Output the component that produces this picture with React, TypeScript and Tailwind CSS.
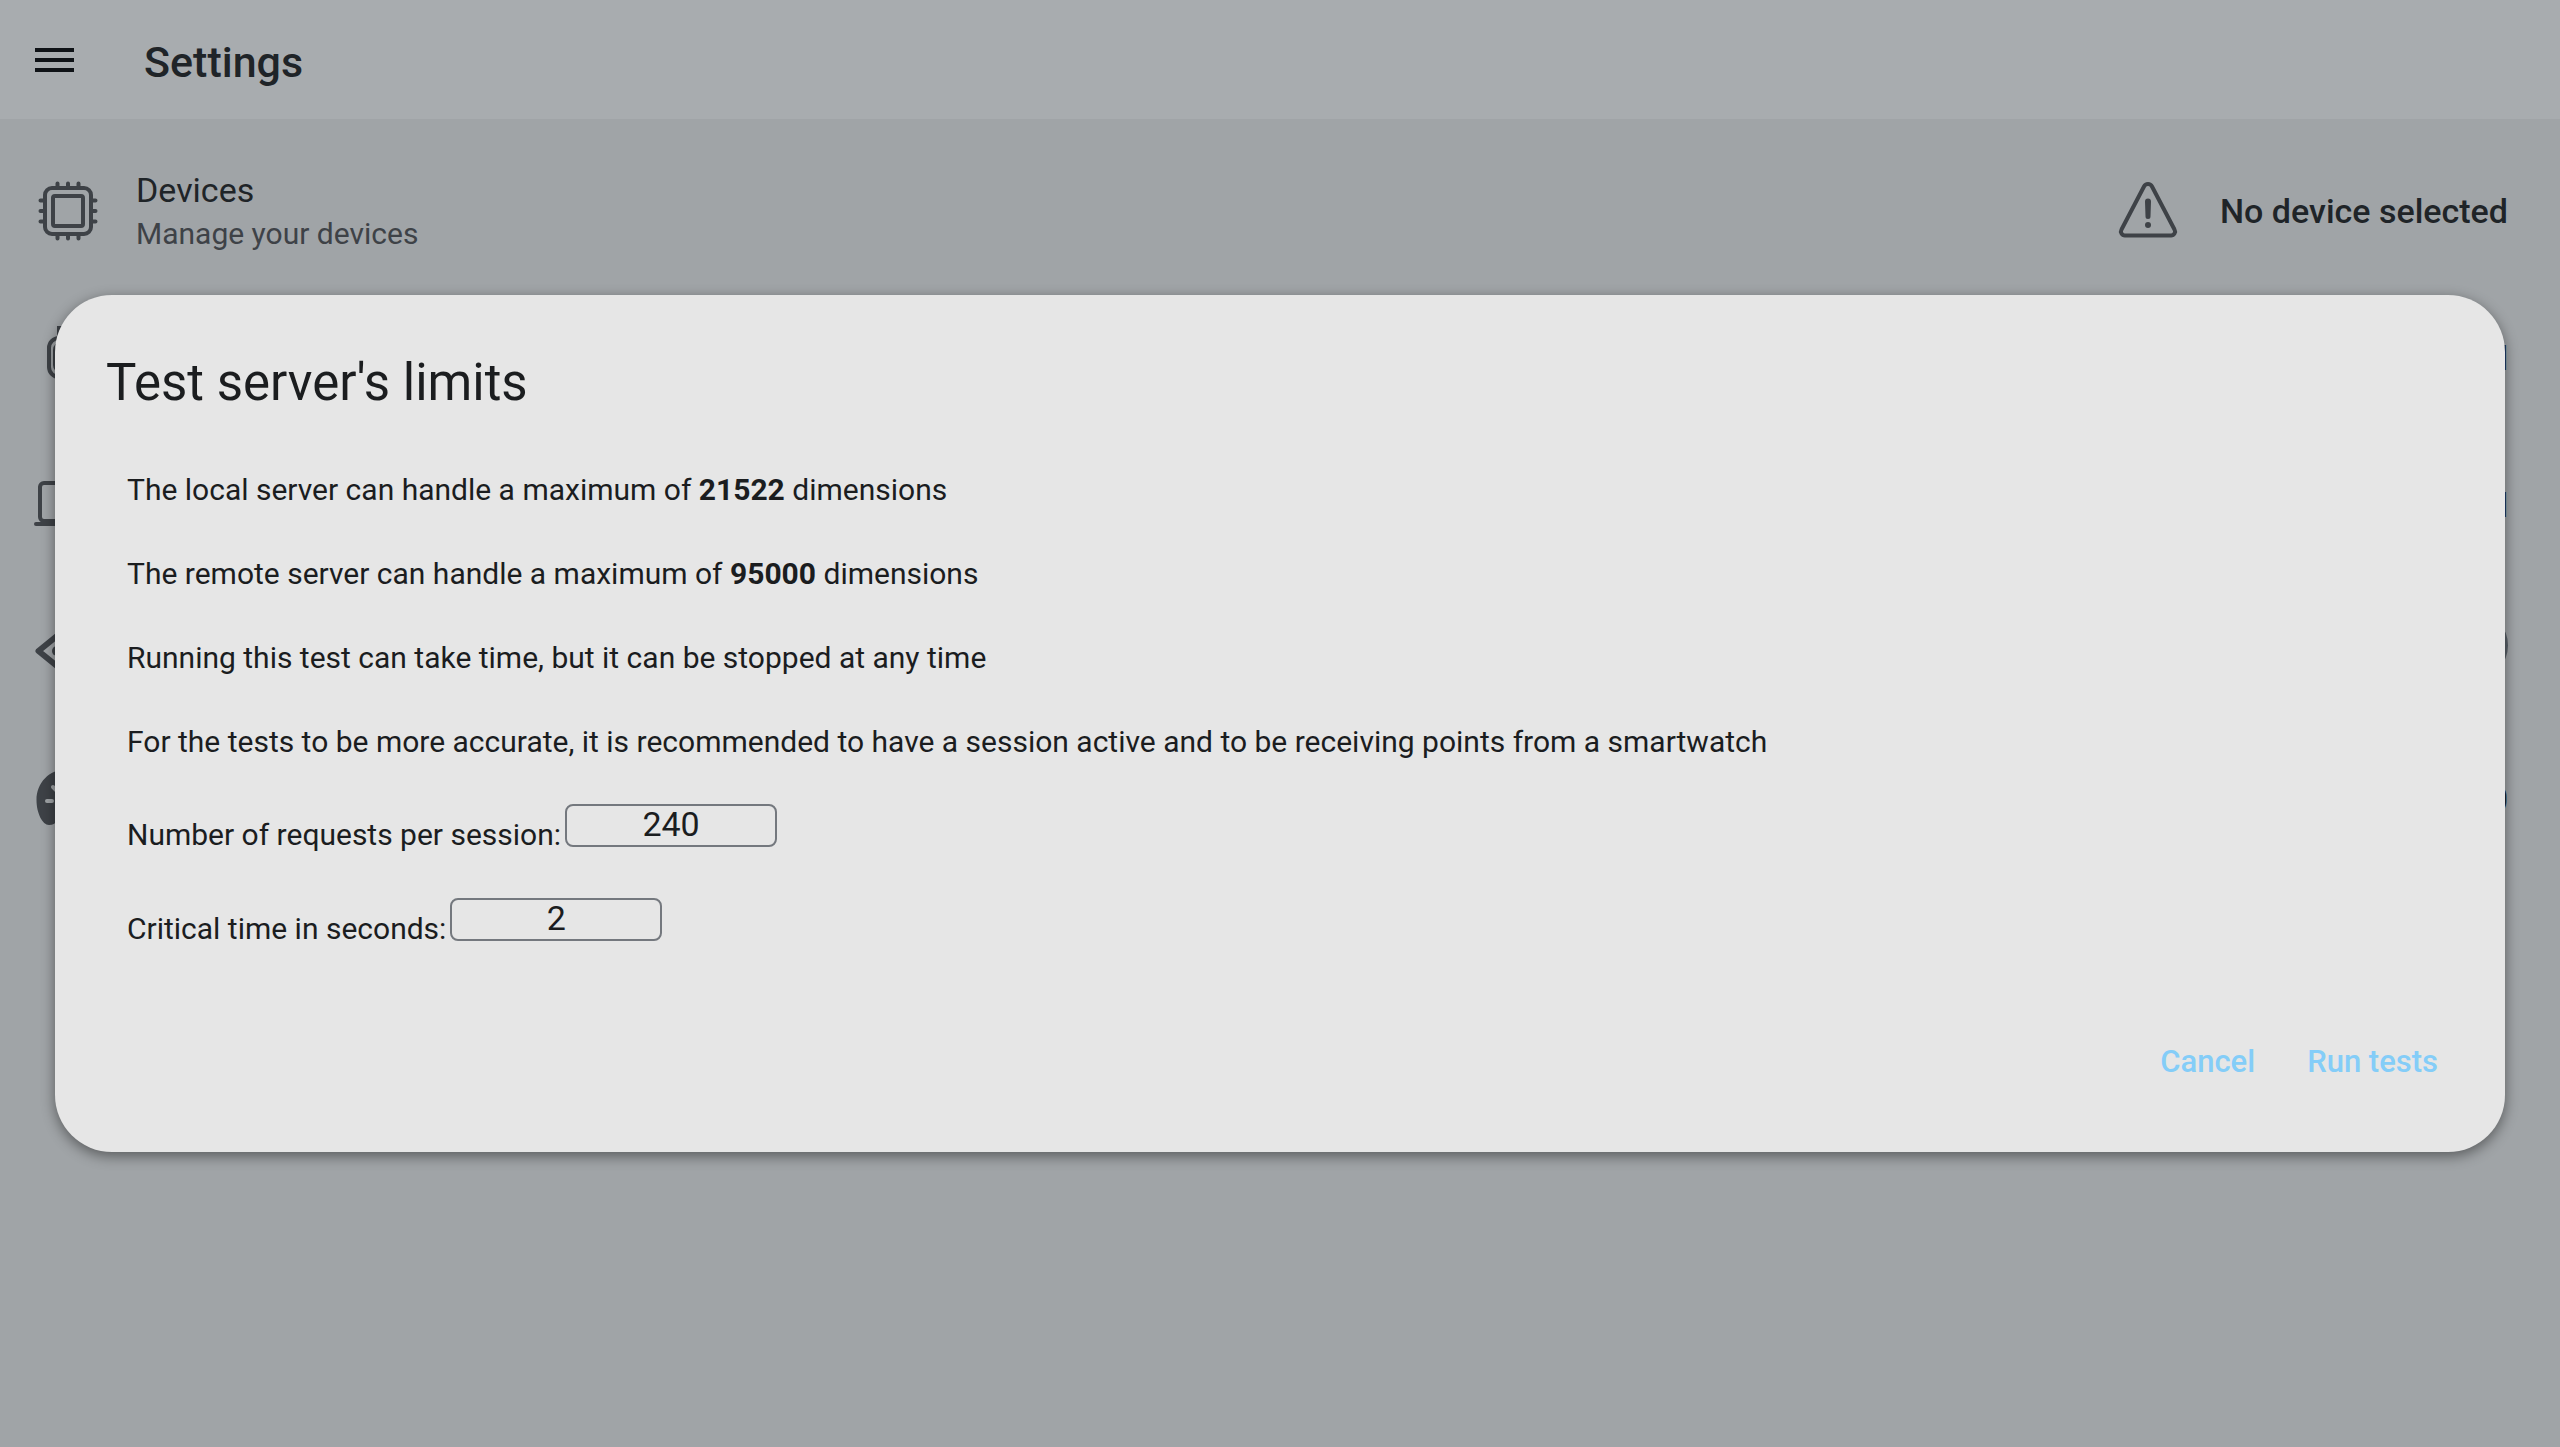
import React from "react";

const iconClass = "size-16 shrink-0 overflow-visible text-[#3e4247]";

function ChipIcon() {
  return (
    <svg viewBox="0 0 64 64" className={iconClass} fill="none" stroke="currentColor" strokeWidth="4" strokeLinecap="round" aria-hidden="true">
      <rect x="9" y="9" width="46" height="46" rx="7" />
      <rect x="17" y="17" width="30" height="30" rx="2" />
      <path d="M21.500 8V4.500M32 8V4.500M42.500 8V4.500M21.500 56v3.500M32 56v3.500M42.500 56v3.500M8 21.500H4.500M8 32H4.500M8 42.500H4.500M56 21.500h3.500M56 32h3.500M56 42.500h3.500" />
    </svg>
  );
}

function WatchIcon() {
  return (
    <svg viewBox="0 0 64 64" className={iconClass} fill="none" stroke="currentColor" strokeWidth="4" aria-hidden="true">
      <rect x="13" y="12" width="38" height="39" rx="10" />
      <rect x="19" y="18" width="26" height="27" rx="6" />
      <path fill="currentColor" stroke="none" d="M21 11V0h22v11zM21 53v11h22V53z" />
    </svg>
  );
}

function LaptopIcon() {
  return (
    <svg viewBox="0 0 64 64" className={iconClass} fill="none" stroke="currentColor" strokeWidth="4" strokeLinecap="round" aria-hidden="true">
      <rect x="4" y="10" width="56" height="38" rx="4" />
      <path d="M0 51h64" />
    </svg>
  );
}

function DiamondIcon() {
  return (
    <svg viewBox="0 0 64 64" className={iconClass} fill="none" stroke="currentColor" strokeWidth="6" strokeLinejoin="round" strokeLinecap="round" aria-hidden="true">
      <path d="M2.500 31 32 7l29.500 24L32 55z" />
      <circle cx="21" cy="31" r="5" fill="currentColor" stroke="none" />
      <circle cx="43" cy="31" r="5" fill="currentColor" stroke="none" />
    </svg>
  );
}

function GaugeIcon() {
  return (
    <svg viewBox="0 0 64 64" className={iconClass} aria-hidden="true">
      <path fill="currentColor" d="M32 2C13 2 .5 16 .5 33c0 13 6 25 12.500 25 8 0 8-7 19-7s11 7 19 7C57.500 58 63.500 46 63.500 33 63.500 16 51 2 32 2z" />
      <path stroke="#a0a4a7" strokeWidth="4" strokeLinecap="round" d="M11 34h5M48 34h5M17 20l5 5M32 13v6" />
    </svg>
  );
}

function WarningIcon() {
  return (
    <svg viewBox="0 0 64 64" className={iconClass} fill="none" stroke="currentColor" strokeWidth="4" strokeLinejoin="round" strokeLinecap="round" aria-hidden="true">
      <path d="M28 7.500a4.500 4.500 0 0 1 8 0L58.500 50.500a4 4 0 0 1-3.500 6H9a4 4 0 0 1-3.500-6z" />
      <path fill="currentColor" stroke="none" d="M29 22.500a3 3 0 0 1 6 0l-.5 15a2.500 2.500 0 0 1-5 0z" />
      <circle cx="32" cy="46" r="3" fill="currentColor" stroke="none" />
    </svg>
  );
}

function Row({ icon, title, detail, children }: { icon: React.ReactNode; title?: string; detail?: string; children: React.ReactNode }) {
  return (
    <li className="flex h-[147px] items-center pr-[52px] pl-9">
      {icon}
      <div className="ml-9 grow pt-[2px]">
        {title && <h2 className="text-[34px] leading-[44px] text-[#1f2428]">{title}</h2>}
        {detail && <p className="text-[30px] leading-[44px] text-[#3e4247]">{detail}</p>}
      </div>
      <div className="flex items-center gap-10 text-[34px] leading-[44px] font-medium text-[#1f2428]">{children}</div>
    </li>
  );
}

function NumberField({ id, label, value }: { id: string; label: string; value: string }) {
  return (
    <div className="flex h-[94px] items-center gap-1">
      <label htmlFor={id} className="pt-5">{label}</label>
      <input
        id={id}
        type="text"
        inputMode="numeric"
        defaultValue={value}
        className="h-[43px] w-[212px] rounded-lg border-2 border-[#74787e] bg-transparent pb-[2px] text-center text-[34px] leading-[36px]"
      />
    </div>
  );
}

export default function App() {
  return (
    <div className="relative min-h-screen bg-[#a0a4a7] font-['Roboto',sans-serif]">
      <header className="flex h-[119px] items-center bg-[#a8acaf]">
        <button type="button" aria-label="Open menu" className="ml-[35px] flex w-[39px] flex-col gap-[6px]">
          <span className="h-1 bg-[#0f1317]" />
          <span className="h-1 bg-[#0f1317]" />
          <span className="h-1 bg-[#0f1317]" />
        </button>
        <h1 className="ml-[70px] pt-1 text-[43px] leading-[52px] font-medium text-[#1f2428]">Settings</h1>
      </header>

      <ul className="pt-[18px]">
        <Row icon={<ChipIcon />} title="Devices" detail="Manage your devices">
          <WarningIcon />
          <span>No device selected</span>
        </Row>
        <Row icon={<WatchIcon />}>
          <span>d</span>
        </Row>
        <Row icon={<LaptopIcon />}>
          <span>d</span>
        </Row>
        <Row icon={<DiamondIcon />}>
          <input type="checkbox" aria-label="Simulation" className="mb-3 h-[67px] w-[109px] appearance-none rounded-full border-4 border-[#596169] bg-[#8f979e]" />
        </Row>
        <Row icon={<GaugeIcon />}>
          <span>0</span>
        </Row>
      </ul>

      <div className="absolute inset-0 flex items-center px-[55px]">
        <section
          role="dialog"
          aria-modal="true"
          aria-labelledby="dialog-title"
          className="w-full rounded-[57px] bg-[#e6e6e6] px-[51px] pt-[53px] pb-[52px] text-[30px] leading-[40px] text-[#1b1d1f] shadow-[0_4px_14px_rgba(0,0,0,0.45)]"
        >
          <h2 id="dialog-title" className="text-[51px] leading-[70px]">Test server's limits</h2>
          <div className="mt-[52px] flex flex-col gap-11 px-[21px]">
            <p>The local server can handle a maximum of <b>21522</b> dimensions</p>
            <p>The remote server can handle a maximum of <b>95000</b> dimensions</p>
            <p>Running this test can take time, but it can be stopped at any time</p>
            <p>For the tests to be more accurate, it is recommended to have a session active and to be receiving points from a smartwatch</p>
          </div>
          <div className="mt-4 px-[21px]">
            <NumberField id="requests" label="Number of requests per session:" value="240" />
            <NumberField id="critical" label="Critical time in seconds:" value="2" />
          </div>
          <div className="mt-[58px] flex justify-end gap-[52px] pr-4 text-[31px] font-medium text-[#84cdf8]">
            <button type="button" className="h-[76px]">Cancel</button>
            <button type="button" className="h-[76px]">Run tests</button>
          </div>
        </section>
      </div>
    </div>
  );
}
